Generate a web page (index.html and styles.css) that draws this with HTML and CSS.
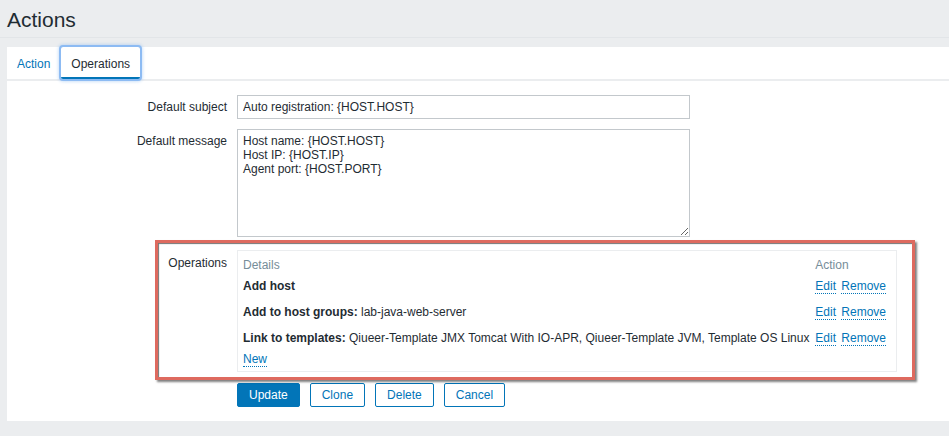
FILE: index.html
```html
<!DOCTYPE html>
<html lang="en">
<head>
    <meta charset="UTF-8">
    <meta name="viewport" content="width=device-width, initial-scale=1.0">
    <title>Actions</title>
    <link rel="stylesheet" href="styles.css">
</head>
<body>
<header class="page-header">
    <h1>Actions</h1>
</header>
<div class="content">
    <ul class="tabs">
        <li class="tab"><a href="#">Action</a></li>
        <li class="tab tab-active"><a href="#">Operations</a></li>
    </ul>
    <form class="form-list">
        <div class="form-row">
            <label class="form-label" for="subject">Default subject</label>
            <div class="form-field">
                <input type="text" id="subject" class="input-wide" value="Auto registration: {HOST.HOST}">
            </div>
        </div>
        <div class="form-row row-message">
            <label class="form-label" for="message">Default message</label>
            <div class="form-field">
                <textarea id="message" class="input-wide">Host name: {HOST.HOST}
Host IP: {HOST.IP}
Agent port: {HOST.PORT}</textarea>
            </div>
        </div>
        <div class="form-row row-ops">
            <span class="highlight"></span>
            <label class="form-label">Operations</label>
            <div class="form-field">
                <div class="ops-box">
                    <table class="ops-table">
                        <thead>
                        <tr>
                            <th>Details</th>
                            <th class="col-action">Action</th>
                        </tr>
                        </thead>
                        <tbody>
                        <tr>
                            <td><strong>Add host</strong></td>
                            <td class="col-action"><a href="#" class="link">Edit</a> <a href="#" class="link">Remove</a></td>
                        </tr>
                        <tr>
                            <td><strong>Add to host groups:</strong> lab-java-web-server</td>
                            <td class="col-action"><a href="#" class="link">Edit</a> <a href="#" class="link">Remove</a></td>
                        </tr>
                        <tr>
                            <td><strong>Link to templates:</strong> Qiueer-Template JMX Tomcat With IO-APR, Qiueer-Template JVM, Template OS Linux</td>
                            <td class="col-action"><a href="#" class="link">Edit</a> <a href="#" class="link">Remove</a></td>
                        </tr>
                        <tr class="row-new">
                            <td colspan="2"><a href="#" class="link">New</a></td>
                        </tr>
                        </tbody>
                    </table>
                </div>
            </div>
        </div>
        <div class="form-actions">
            <button type="submit" class="btn btn-main">Update</button>
            <button type="button" class="btn">Clone</button>
            <button type="button" class="btn">Delete</button>
            <button type="button" class="btn">Cancel</button>
        </div>
    </form>
</div>
</body>
</html>
```

FILE: styles.css
```css
body {
    margin: 0;
    padding: 0;
    background-color: #ebedef;
    color: #1f2c33;
    font-family: "Liberation Sans", Arial, sans-serif;
    font-size: 12px;
    line-height: 14px;
    overflow: hidden;
}

a {
    color: #0275b8;
    text-decoration: none;
}

.page-header {
    padding: 8px 7px 5px;
    border-bottom: 1px solid #e2e5e8;
}

.page-header h1 {
    margin: 0;
    font-size: 21px;
    font-weight: normal;
    line-height: 24px;
}

.content {
    margin: 9px 0 0 7px;
    background-color: #fff;
    padding-bottom: 14px;
}

.tabs {
    display: flex;
    margin: 0;
    padding: 0;
    list-style: none;
    border-bottom: 2px solid #ebedef;
}

.tab a {
    display: block;
    height: 32px;
    line-height: 34px;
    padding: 0 10px;
    box-sizing: border-box;
}

.tab-active a {
    margin-left: 1px;
    color: #1f2c33;
    border-bottom: 2px solid #0275b8;
    border-radius: 2px;
    box-shadow: 0 0 0 2px #8dbbf3, 0 0 3px 3px rgba(141, 187, 243, 0.4);
}

.form-list {
    padding-top: 14px;
}

.form-row {
    display: flex;
    margin-bottom: 10px;
}

.row-message {
    margin-bottom: 13px;
}

.row-ops {
    position: relative;
    margin-bottom: 11px;
}

.form-label {
    flex: 0 0 230px;
    box-sizing: border-box;
    padding: 5px 10px 0 0;
    text-align: right;
}

.row-ops .form-label {
    padding-top: 6px;
}

.input-wide {
    display: block;
    width: 453px;
    box-sizing: border-box;
    margin: 0;
    padding: 4px 5px;
    border: 1px solid #c3c8cc;
    border-radius: 0;
    font-family: inherit;
    font-size: 12px;
    line-height: 14px;
    color: #1f2c33;
    background: #fff;
}

input.input-wide {
    height: 24px;
}

textarea.input-wide {
    height: 108px;
    resize: both;
}

.ops-box {
    width: 660px;
    box-sizing: border-box;
    border: 1px solid #ebedef;
}

.ops-table {
    width: 100%;
    border-collapse: collapse;
    white-space: nowrap;
}

.ops-table th {
    padding: 7px 5px 2px;
    text-align: left;
    font-weight: normal;
    color: #768d99;
}

.ops-table td {
    padding: 5px 5px 7px;
}

.ops-table .col-action {
    width: 1%;
    padding-left: 0;
    padding-right: 10px;
}

.ops-table .row-new td {
    padding: 0 5px 5px;
}

.link {
    border-bottom: 1px dotted #0275b8;
}

.link + .link {
    margin-left: 2px;
}

.highlight {
    position: absolute;
    top: -10px;
    left: 148px;
    width: 760px;
    height: 140px;
    box-sizing: border-box;
    border: 3px solid #de6a5f;
    box-shadow: inset 1px 1px 1px rgba(0, 0, 0, 0.55), 2px 2px 2px rgba(0, 0, 0, 0.5);
    pointer-events: none;
}

.form-actions {
    display: flex;
    gap: 10px;
    padding-left: 230px;
}

.btn {
    height: 24px;
    margin: 0;
    padding: 0 11px;
    border: 1px solid #0275b8;
    border-radius: 2px;
    background-color: #fff;
    color: #0275b8;
    font-family: inherit;
    font-size: 12px;
    line-height: 22px;
    cursor: pointer;
}

.btn-main {
    background-color: #0275b8;
    color: #fff;
}
```
